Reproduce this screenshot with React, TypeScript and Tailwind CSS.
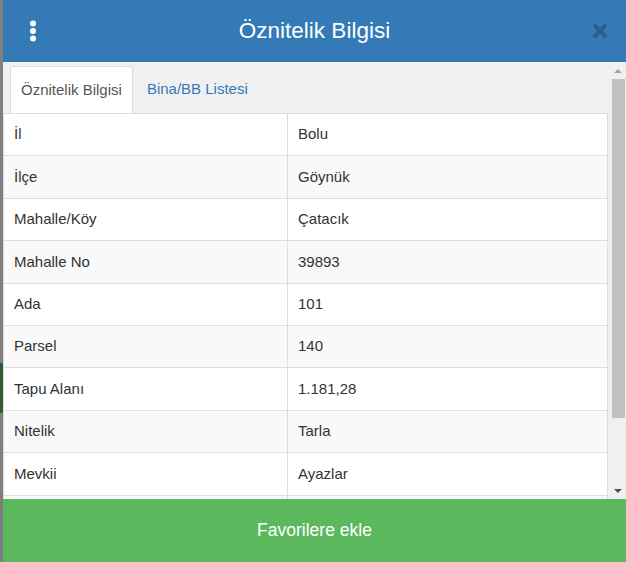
import React from "react"

const rows: [string, string][] = [
    ["İl", "Bolu"],
    ["İlçe", "Göynük"],
    ["Mahalle/Köy", "Çatacık"],
    ["Mahalle No", "39893"],
    ["Ada", "101"],
    ["Parsel", "140"],
    ["Tapu Alanı", "1.181,28"],
    ["Nitelik", "Tarla"],
    ["Mevkii", "Ayazlar"],
    ["", ""],
]

function VerticalDots() {
    return (
        <svg width="8" height="22" viewBox="0 0 8 22" className="fill-white">
            <circle cx="4" cy="3.5" r="3" />
            <circle cx="4" cy="11" r="3" />
            <circle cx="4" cy="18.5" r="3" />
        </svg>
    )
}

function CloseIcon() {
    return (
        <svg width="16" height="16" viewBox="0 0 16 16">
            <path d="M3 3 L13 13 M13 3 L3 13" stroke="#2a5d8f" strokeWidth="4" strokeLinecap="round" />
        </svg>
    )
}

export default function App() {
    return (
        <div className="flex h-[562px] w-[626px] overflow-hidden" style={{ fontFamily: '"Liberation Sans", Arial, sans-serif' }}>
            {/* map behind the modal */}
            <div className="flex w-[3px] shrink-0 flex-col bg-[#7f7f7f]">
                <div className="h-[363px]" />
                <div className="h-[50px] bg-[#2f5f34]" />
            </div>

            <div className="flex flex-1 flex-col bg-[#f0f0f0]">
                <div className="flex h-[62px] shrink-0 items-center justify-between bg-[#337ab7] pl-[26px] pr-[18px]">
                    <VerticalDots />
                    <h4 className="text-[22.5px] text-white">Öznitelik Bilgisi</h4>
                    <CloseIcon />
                </div>

                <div className="flex min-h-0 flex-1">
                    <div className="flex min-w-0 flex-1 flex-col overflow-hidden">
                        <div className="flex h-[51px] shrink-0 items-end pl-[7px]">
                            <div className="flex h-[47px] items-center rounded-t-[3px] border border-b-0 border-[#ddd] bg-white px-[10px] text-[15px] text-[#555]">
                                Öznitelik Bilgisi
                            </div>
                            <div className="flex h-[47px] items-center pl-[14px] text-[15px] text-[#337ab7]">
                                Bina/BB Listesi
                            </div>
                        </div>
                        <div className="mr-[2px] shrink-0 border-t border-l border-r border-[#ddd]">
                            {rows.map(([k, v], i) => (
                                <div
                                    key={i}
                                    className={`grid h-[42.4px] grid-cols-[284px_1fr] border-b border-[#ddd] text-[15px] text-[#333] ${i % 2 === 0 ? "bg-white" : "bg-[#f9f9f9]"}`}
                                >
                                    <div className="flex items-center border-r border-[#ddd] pl-[10px]">{k}</div>
                                    <div className="flex items-center pl-[10px]">{v}</div>
                                </div>
                            ))}
                        </div>
                    </div>

                    {/* scrollbar */}
                    <div className="flex w-[16px] shrink-0 flex-col items-center bg-[#f0f0f0]">
                        <div className="flex h-[17px] items-center justify-center">
                            <div className="h-0 w-0 border-x-[4px] border-b-[4px] border-x-transparent border-b-[#a3a3a3]" />
                        </div>
                        <div className="h-[339px] w-[13px] bg-[#c1c1c1]" />
                        <div className="flex-1" />
                        <div className="flex h-[17px] items-center justify-center">
                            <div className="h-0 w-0 border-x-[4px] border-t-[4px] border-x-transparent border-t-[#505050]" />
                        </div>
                    </div>
                </div>

                <button className="flex h-[63px] shrink-0 items-center justify-center bg-[#5cb85c] text-[17.5px] text-white">
                    Favorilere ekle
                </button>
            </div>
        </div>
    )
}
